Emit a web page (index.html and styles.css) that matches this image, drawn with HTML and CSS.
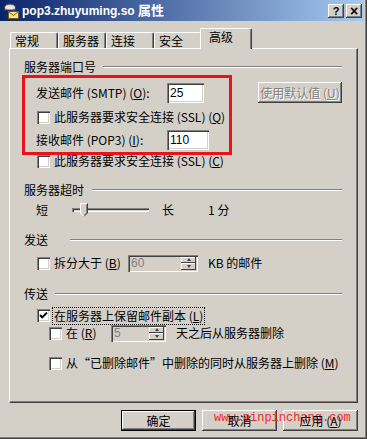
FILE: index.html
```html
<!DOCTYPE html>
<html lang="zh-CN">
<head>
<meta charset="utf-8">
<title>pop3.zhuyuming.so 属性</title>
<link rel="stylesheet" href="styles.css">
</head>
<body>
<div class="window">
  <div class="titlebar">
    <svg class="app-icon" width="16" height="16" viewBox="0 0 16 16">
      <path d="M1.5 7 V4.5 C1.5 2 4 1 7 1 C10 1 12.5 2 12.5 4.5 V7 Z" fill="#b8b8c0" stroke="#404048" stroke-width="1"/>
      <ellipse cx="7" cy="4.2" rx="4.5" ry="2" fill="#e8e8f0"/>
      <rect x="5.5" y="8.5" width="10" height="7" fill="#f4e48c" stroke="#7a5a10" stroke-width="1"/>
      <path d="M5.5 8.5 L10.5 12.5 L15.5 8.5" fill="none" stroke="#7a5a10" stroke-width="1"/>
    </svg>
    <span class="title">pop3.zhuyuming.so <span class="title-cjk">属性</span></span>
    <div class="caption-btns">
      <span class="cap-btn">?</span>
      <span class="cap-btn cap-close">×</span>
    </div>
  </div>

  <div class="body">
    <div class="tabs">
      <div class="tab">常规</div>
      <div class="tab">服务器</div>
      <div class="tab">连接</div>
      <div class="tab">安全</div>
      <div class="tab active">高级</div>
    </div>

    <div class="panel">
      <div class="group-head"><span>服务器端口号</span><i class="etch etch-ports"></i></div>

      <div class="field-row row-smtp">
        <span class="field-label">发送邮件 (SMTP) (<u>O</u>):</span>
        <span class="textbox">25</span>
        <span class="btn btn-wide disabled">使用默认值 (<u>U</u>)</span>
      </div>

      <div class="check-row row-ssl1">
        <span class="checkbox"></span>
        <span>此服务器要求安全连接 (SSL) (<u>Q</u>)</span>
      </div>

      <div class="field-row row-pop3">
        <span class="field-label">接收邮件 (POP3) (<u>I</u>):</span>
        <span class="textbox">110</span>
      </div>

      <div class="check-row row-ssl2">
        <span class="checkbox"></span>
        <span>此服务器要求安全连接 (SSL) (<u>C</u>)</span>
      </div>

      <div class="group-head head-timeout"><span>服务器超时</span><i class="etch etch-timeout"></i></div>

      <div class="slider-row">
        <span>短</span>
        <span class="track">
          <svg class="thumb" width="8" height="14" viewBox="0 0 8 14">
            <path d="M0.5 0.5 H7.5 V10 L4 13.5 L0.5 10 Z" fill="#d4d0c8"/>
            <path d="M0.5 10 V0.5 H7" fill="none" stroke="#ffffff" stroke-width="1"/>
            <path d="M7.5 0.5 V10 L4 13.5" fill="none" stroke="#404040" stroke-width="1"/>
            <path d="M6.5 1.5 V9.6 L4 12" fill="none" stroke="#808080" stroke-width="1"/>
            <path d="M0.5 10 L4 13.5" fill="none" stroke="#ffffff" stroke-width="1"/>
          </svg>
        </span>
        <span class="slider-long">长</span>
        <span class="slider-val">1 分</span>
      </div>

      <div class="group-head head-send"><span>发送</span><i class="etch etch-send"></i></div>

      <div class="check-row row-split">
        <span class="checkbox"></span>
        <span class="split-label">拆分大于 (<u>B</u>)</span>
        <span class="spin spin-split">
          <span class="spin-text">60</span>
          <span class="spin-btns"><span class="spin-btn"><i class="arrow-up"></i></span><span class="spin-btn"><i class="arrow-down"></i></span></span>
        </span>
        <span class="after-spin">KB 的邮件</span>
      </div>

      <div class="group-head head-deliver"><span>传送</span><i class="etch etch-deliver"></i></div>

      <div class="check-row row-keep">
        <span class="checkbox">
          <svg width="13" height="13" viewBox="0 0 13 13"><path d="M3 6 L5.2 8.4 L10 3.6" fill="none" stroke="#000" stroke-width="2"/></svg>
        </span>
        <span class="focus">在服务器上保留邮件副本 (<u>L</u>)</span>
      </div>

      <div class="check-row sub row-days">
        <span class="checkbox"></span>
        <span class="days-label">在 (<u>R</u>)</span>
        <span class="spin spin-days">
          <span class="spin-text">5</span>
          <span class="spin-btns"><span class="spin-btn"><i class="arrow-up"></i></span><span class="spin-btn"><i class="arrow-down"></i></span></span>
        </span>
        <span class="after-spin">天之后从服务器删除</span>
      </div>

      <div class="check-row sub row-deleted">
        <span class="checkbox"></span>
        <span>从“已删除邮件”中删除的同时从服务器上删除 (<u>M</u>)</span>
      </div>
    </div>

    <div class="buttons">
      <span class="btn btn-default"><span class="btn-label">确定</span></span>
      <span class="btn"><span class="btn-label">取消</span></span>
      <span class="btn"><span class="btn-label">应用 (<u>A</u>)</span></span>
    </div>
  </div>

  <div class="highlight"></div>
  <div class="watermark">www.pinpinchang.com</div>
</div>
</body>
</html>
```

FILE: styles.css
```css
html, body {
  margin: 0;
  padding: 0;
  background: #d4d0c8;
}

body {
  font-family: "Noto Sans CJK SC", sans-serif;
  font-size: 12px;
  line-height: 14px;
  color: #000;
}

u {
  text-decoration: underline;
  text-underline-offset: 1px;
}

.window {
  position: relative;
  width: 367px;
  height: 439px;
  box-sizing: border-box;
  background: #d4d0c8;
  box-shadow: inset -1px -1px #404040, inset -2px -2px #808080;
  overflow: hidden;
}

/* title bar */
.titlebar {
  display: flex;
  align-items: center;
  width: 364px;
  height: 21px;
  background: linear-gradient(to right, #0a246a, #a6caf0);
  color: #fff;
}

.app-icon {
  flex: none;
  margin-left: 3px;
}

.title {
  margin-left: 3px;
  font-family: "Liberation Sans", "Noto Sans CJK SC", sans-serif;
  font-weight: bold;
  font-size: 12px;
  white-space: nowrap;
}

.title-cjk {
  font-family: "Noto Sans CJK SC", sans-serif;
  font-size: 13px;
}

.caption-btns {
  display: flex;
  gap: 2px;
  margin-left: auto;
  margin-right: 2px;
}

.cap-btn {
  display: flex;
  align-items: center;
  justify-content: center;
  width: 16px;
  height: 14px;
  background: #d4d0c8;
  box-shadow: inset -1px -1px #404040, inset 1px 1px #fff, inset -2px -2px #808080;
  color: #000;
  font-family: "Liberation Sans", sans-serif;
  font-weight: bold;
  font-size: 11px;
  line-height: 14px;
}

.cap-close {
  font-size: 14px;
}

/* body */
.body {
  padding: 7px 0 0 9px;
}

.tabs {
  display: flex;
  align-items: flex-end;
  height: 20px;
  padding-left: 1px;
}

.tab {
  box-sizing: border-box;
  width: 48px;
  height: 16px;
  padding: 1px 0 0 4px;
  border-top: 1px solid #fff;
  border-left: 1px solid #fff;
  border-right: 1px solid #404040;
  border-radius: 2px 2px 0 0;
  box-shadow: inset -1px 0 #808080;
  line-height: 14px;
  white-space: nowrap;
}

.tab.active {
  position: relative;
  z-index: 1;
  width: 52px;
  height: 21px;
  margin-left: -2px;
  margin-bottom: -1px;
  padding: 1px 0 0 8px;
  background: #d4d0c8;
}

.panel {
  box-sizing: border-box;
  width: 349px;
  height: 355px;
  padding: 11px 15px 0 14px;
  border: 1px solid;
  border-color: #fff #404040 #404040 #fff;
  box-shadow: inset -1px -1px #808080;
}

.group-head {
  display: flex;
  align-items: center;
  height: 14px;
  white-space: nowrap;
}

.etch {
  flex: 1;
  height: 0;
  border-top: 1px solid #808080;
  border-bottom: 1px solid #fff;
}

.etch-ports { margin-left: 7px; }
.etch-timeout { margin-left: 8px; }
.etch-send { margin-left: 22px; }
.etch-deliver { margin-left: 7px; }

.head-timeout { margin-top: 15px; }
.head-send { margin-top: 13px; }
.head-deliver { margin-top: 15px; }

/* field rows */
.field-row {
  display: flex;
  align-items: center;
  height: 21px;
  padding-left: 12px;
  white-space: nowrap;
}

.row-smtp { margin-top: 8px; }
.row-pop3 { margin-top: 6px; height: 20px; }

.field-label {
  width: 131px;
  flex: none;
}

.textbox {
  box-sizing: border-box;
  width: 42px;
  height: 20px;
  padding: 3px 0 0 3px;
  background: #fff;
  box-shadow: inset 1px 1px #808080, inset 2px 2px #404040, inset -1px -1px #fff, inset -2px -2px #d4d0c8;
  font-family: "Liberation Sans", sans-serif;
  font-size: 12px;
  line-height: 14px;
}

/* buttons */
.btn {
  display: flex;
  align-items: center;
  justify-content: center;
  box-sizing: border-box;
  width: 75px;
  height: 21px;
  background: #d4d0c8;
  box-shadow: inset -1px -1px #404040, inset 1px 1px #fff, inset -2px -2px #808080;
  white-space: nowrap;
}

.btn-wide {
  width: 84px;
  flex: none;
  margin-left: 54px;
}

.btn.disabled {
  color: #808080;
  text-shadow: 1px 1px #fff;
}

.btn-default {
  border: 1px solid #000;
}

.btn-label {
  position: relative;
  z-index: 2;
}

/* check rows */
.check-row {
  display: flex;
  align-items: center;
  gap: 4px;
  height: 14px;
  padding-left: 13px;
  white-space: nowrap;
}

.check-row.sub {
  padding-left: 25px;
}

.checkbox {
  flex: none;
  box-sizing: border-box;
  width: 13px;
  height: 13px;
  background: #fff;
  box-shadow: inset 1px 1px #808080, inset 2px 2px #404040, inset -1px -1px #fff, inset -2px -2px #d4d0c8;
}

.checkbox svg {
  display: block;
}

.row-ssl1 { margin-top: 7px; }
.row-ssl2 { margin-top: 4px; }

/* slider */
.slider-row {
  display: flex;
  align-items: center;
  height: 20px;
  margin-top: 3px;
  padding-left: 12px;
  white-space: nowrap;
}

.track {
  position: relative;
  flex: none;
  box-sizing: border-box;
  width: 77px;
  height: 4px;
  margin-left: 24px;
  box-shadow: inset 1px 1px #808080, inset 2px 2px #404040, inset -1px -1px #fff;
}

.thumb {
  position: absolute;
  left: 8px;
  top: -5px;
  display: block;
}

.slider-long { margin-left: 13px; }
.slider-val { margin-left: 34px; }

/* spinners */
.spin {
  display: flex;
  flex: none;
  box-sizing: border-box;
  height: 17px;
  padding: 2px;
  background: #d4d0c8;
  box-shadow: inset 1px 1px #808080, inset 2px 2px #404040, inset -1px -1px #fff, inset -2px -2px #d4d0c8;
  color: #808080;
  font-family: "Liberation Sans", sans-serif;
}

.spin-split { width: 70px; }
.spin-days { width: 55px; }

.spin-text {
  flex: 1;
  padding-left: 1px;
  line-height: 13px;
}

.spin-btns {
  display: flex;
  flex-direction: column;
  width: 15px;
}

.spin-btn {
  flex: 1;
  display: flex;
  align-items: center;
  justify-content: center;
  background: #d4d0c8;
  box-shadow: inset -1px -1px #404040, inset 1px 1px #fff;
}

.arrow-up {
  width: 0;
  height: 0;
  border-left: 2.5px solid transparent;
  border-right: 2.5px solid transparent;
  border-bottom: 3px solid #404040;
}

.arrow-down {
  width: 0;
  height: 0;
  border-left: 2.5px solid transparent;
  border-right: 2.5px solid transparent;
  border-top: 3px solid #404040;
}

.row-split {
  height: 18px;
  margin-top: 7px;
}

.split-label {
  width: 70px;
  flex: none;
}

.after-spin {
  margin-left: 6px;
}

.row-keep {
  height: 17px;
  margin-top: 6px;
  gap: 2px;
}

.focus {
  padding: 1px;
  border: 1px dotted #000;
  line-height: 14px;
}

.row-days {
  height: 18px;
}

.days-label {
  width: 41px;
  flex: none;
}

.row-deleted {
  margin-top: 14px;
}

.buttons {
  display: flex;
  justify-content: flex-end;
  gap: 6px;
  width: 349px;
  margin-top: 7px;
}

/* overlays */
.highlight {
  position: absolute;
  left: 22px;
  top: 75px;
  width: 210px;
  height: 80px;
  box-sizing: border-box;
  border: 3px solid #e8141c;
}

.watermark {
  position: absolute;
  z-index: 1;
  left: 214px;
  top: 411px;
  color: #ee2a2a;
  font-family: "Liberation Mono", monospace;
  font-size: 12px;
  line-height: 14px;
  white-space: nowrap;
}
```
